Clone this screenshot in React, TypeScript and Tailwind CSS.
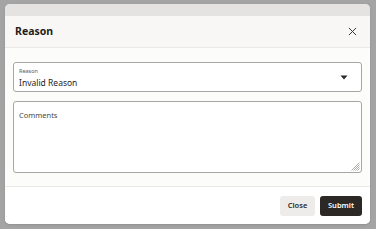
import React from 'react';

function CloseIcon() {
  return (
    <svg width="9" height="9" viewBox="0 0 10 10" fill="none" stroke="#3a3836" strokeWidth="1.1">
      <path d="M1 1 L9 9 M9 1 L1 9" />
    </svg>
  );
}

function Caret() {
  return (
    <svg width="8" height="5" viewBox="0 0 8 5" fill="#2b2826">
      <path d="M0.5 0.5 H7.5 L4 4.5 Z" />
    </svg>
  );
}

function Grip() {
  return (
    <svg width="10" height="10" viewBox="0 0 10 10" stroke="#9a9895" strokeWidth="0.8">
      <path d="M9.5 1.5 L1.5 9.5 M9.5 3.5 L3.5 9.5 M9.5 5.5 L5.5 9.5 M9.5 7.5 L7.5 9.5" />
    </svg>
  );
}

export default function App() {
  return (
    <div
      className="w-[376px] h-[229px] bg-[#a4a4a4] pt-[4px] pl-[5px] pr-[6px] pb-[5px]"
      style={{ fontFamily: '"Noto Sans", "Open Sans", sans-serif' }}
    >
      <div className="h-full flex flex-col rounded-[5px] overflow-hidden bg-white shadow-sm">
        <div className="h-[12px] bg-[#e4e3e1]" />
        <div className="h-[32px] bg-[#f8f7f5] border-b border-[#ebe9e6] flex items-center justify-between pl-[10px] pr-[13px]">
          <span className="text-[10.5px] font-bold text-[#1f1d1b]">Reason</span>
          <CloseIcon />
        </div>
        <div className="flex-1 bg-[#fcfcfb] px-[8px] pt-[14px] flex flex-col gap-[9px]">
          <div className="h-[30px] border border-[#a8a6a3] rounded-[3px] bg-white flex items-center justify-between pl-[5px] pr-[13px]">
            <div className="flex flex-col leading-none pt-[2px]">
              <span className="text-[5.5px] text-[#5c5a57] mb-[5px]">Reason</span>
              <span className="text-[8.5px] text-[#1f1d1b]">Invalid Reason</span>
            </div>
            <Caret />
          </div>
          <div className="h-[72px] border border-[#a8a6a3] rounded-[3px] bg-white relative pl-[5px] pt-[10px]">
            <span className="text-[7.5px] text-[#4a4845] leading-none block">Comments</span>
            <div className="absolute right-[1px] bottom-[1px]">
              <Grip />
            </div>
          </div>
        </div>
        <div className="h-[38px] bg-white border-t border-[#ece9e6] flex items-center justify-end gap-[5px] pr-[8px]">
          <button className="h-[20px] w-[35px] rounded-[3px] bg-[#edecea] text-[7.5px] font-semibold text-[#2b2826]">
            Close
          </button>
          <button className="h-[20px] w-[42px] rounded-[3px] bg-[#2b2826] text-[7.5px] font-semibold text-white">
            Submit
          </button>
        </div>
      </div>
    </div>
  );
}
